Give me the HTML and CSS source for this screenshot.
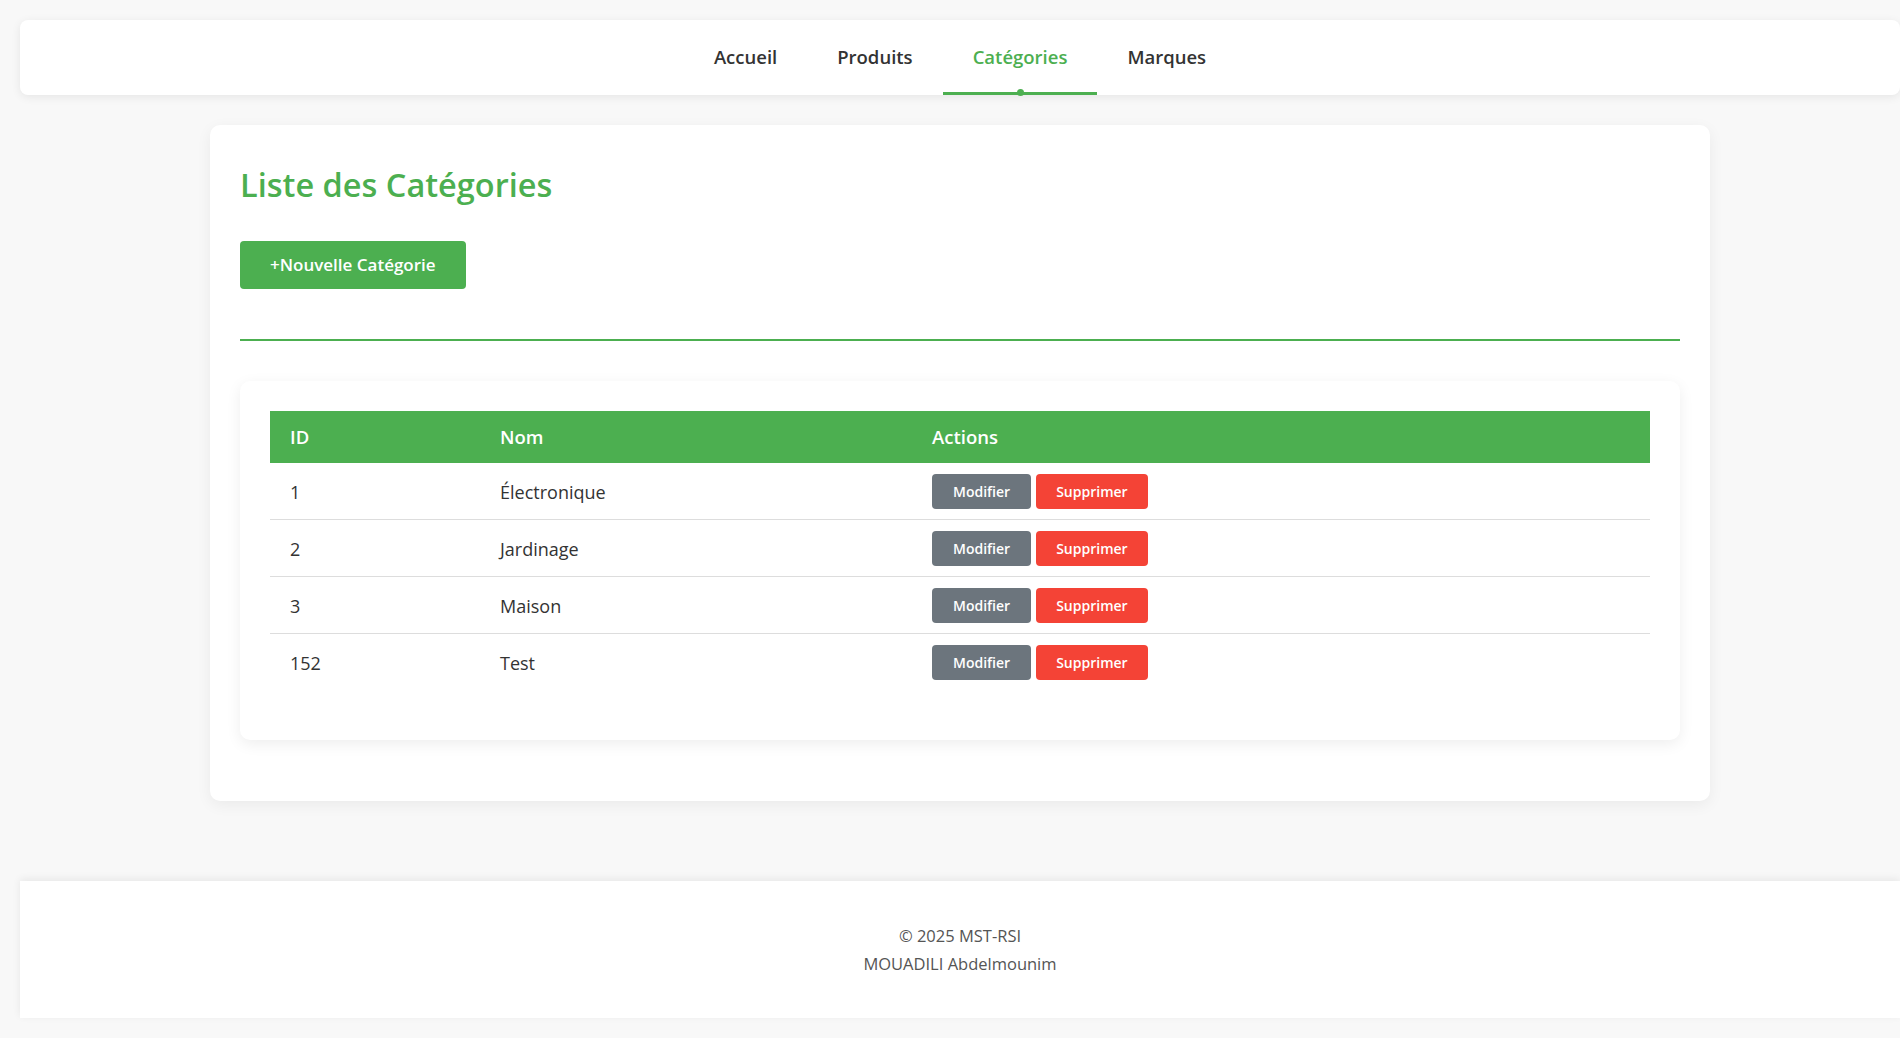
FILE: index.html
```html
<!DOCTYPE html>
<html lang="fr">
<head>
<meta charset="utf-8">
<title>Liste des Catégories</title>
<link rel="stylesheet" href="styles.css">
</head>
<body>
<nav class="navbar">
  <a class="nav-link" href="#">Accueil</a>
  <a class="nav-link" href="#">Produits</a>
  <a class="nav-link active" href="#">Catégories</a>
  <a class="nav-link" href="#">Marques</a>
</nav>

<main class="card">
  <h1 class="title">Liste des Catégories</h1>
  <a class="btn-new" href="#">+Nouvelle Catégorie</a>
  <div class="divider"></div>

  <div class="table-card">
    <table class="data-table">
      <thead>
        <tr><th class="col-id">ID</th><th class="col-nom">Nom</th><th>Actions</th></tr>
      </thead>
      <tbody>
        <tr><td>1</td><td>Électronique</td><td><div class="actions"><a class="btn btn-edit" href="#">Modifier</a><a class="btn btn-del" href="#">Supprimer</a></div></td></tr>
        <tr><td>2</td><td>Jardinage</td><td><div class="actions"><a class="btn btn-edit" href="#">Modifier</a><a class="btn btn-del" href="#">Supprimer</a></div></td></tr>
        <tr><td>3</td><td>Maison</td><td><div class="actions"><a class="btn btn-edit" href="#">Modifier</a><a class="btn btn-del" href="#">Supprimer</a></div></td></tr>
        <tr><td>152</td><td>Test</td><td><div class="actions"><a class="btn btn-edit" href="#">Modifier</a><a class="btn btn-del" href="#">Supprimer</a></div></td></tr>
      </tbody>
    </table>
  </div>
</main>

<footer class="footer">
  <div class="footer-line">© 2025 MST-RSI</div>
  <div class="footer-line">MOUADILI Abdelmounim</div>
</footer>
</body>
</html>
```

FILE: styles.css
```css
* { box-sizing: border-box; }

html, body { overflow-x: hidden; }

body {
  margin: 0;
  padding: 20px 0 20px 20px;
  background: #f8f8f8;
  font-family: "Open Sans", "Noto Sans", sans-serif;
  color: #333;
}

a { text-decoration: none; }

/* Navbar */
.navbar {
  height: 75px;
  background: #fff;
  border-radius: 8px;
  box-shadow: 0 2px 10px rgba(0, 0, 0, 0.08);
  display: flex;
  justify-content: center;
  align-items: stretch;
}

.nav-link {
  position: relative;
  display: flex;
  align-items: center;
  padding: 0 30px 2px;
  font-size: 18.5px;
  font-weight: 600;
  color: #333;
}

.nav-link.active { color: #4caf50; }

.nav-link.active::after {
  content: "";
  position: absolute;
  left: 0;
  right: 0;
  bottom: 0;
  height: 3px;
  background: #4caf50;
}

.nav-link.active::before {
  content: "";
  position: absolute;
  left: 50%;
  bottom: -1px;
  width: 7px;
  height: 7px;
  margin-left: -3.5px;
  border-radius: 50%;
  background: #4caf50;
}

/* Main card */
.card {
  max-width: 1500px;
  margin: 30px auto 0;
  background: #fff;
  border-radius: 10px;
  box-shadow: 0 4px 15px rgba(0, 0, 0, 0.06);
  padding: 30px 30px 31px;
}

.title {
  margin: 8px 0 0;
  font-size: 32.5px;
  line-height: 44px;
  font-weight: 600;
  color: #4caf50;
}

.btn-new {
  display: inline-block;
  margin-top: 34px;
  padding: 12px 30px;
  font-size: 17px;
  line-height: 24px;
  font-weight: 600;
  color: #fff;
  background: #4caf50;
  border-radius: 4px;
}

.divider {
  margin-top: 50px;
  border-top: 2px solid #4caf50;
}

/* Table card */
.table-card {
  margin: 40px 0 30px;
  background: #fff;
  border-radius: 10px;
  box-shadow: 0 4px 15px rgba(0, 0, 0, 0.07);
  padding: 30px;
}

.data-table {
  width: 100%;
  border-collapse: collapse;
  table-layout: fixed;
  margin-bottom: 20px;
}

.col-id { width: 210px; }
.col-nom { width: 432px; }

.data-table th {
  background: #4caf50;
  color: #fff;
  text-align: left;
  font-size: 18.5px;
  font-weight: 600;
  line-height: 24px;
  padding: 14px 20px;
}

.data-table td {
  padding: 11px 20px 10px;
  font-size: 18px;
  line-height: 24px;
  color: #333;
  border-bottom: 1px solid #ddd;
  vertical-align: middle;
}

.data-table tbody tr:last-child td { border-bottom: none; }

.actions {
  display: flex;
  gap: 5px;
}

.btn {
  display: inline-block;
  padding: 8px 20px;
  font-size: 14px;
  line-height: 19px;
  font-weight: 600;
  color: #fff;
  border-radius: 4px;
}

.btn-edit { background: #6c757d; padding: 8px 21px; }
.btn-del { background: #f44336; }

/* Footer */
.footer {
  margin-top: 80px;
  background: #fff;
  box-shadow: 0 -2px 8px rgba(0, 0, 0, 0.07);
  padding: 41px 0 40px;
  text-align: center;
}

.footer-line {
  font-size: 16.5px;
  line-height: 28px;
  color: #555;
}
```
